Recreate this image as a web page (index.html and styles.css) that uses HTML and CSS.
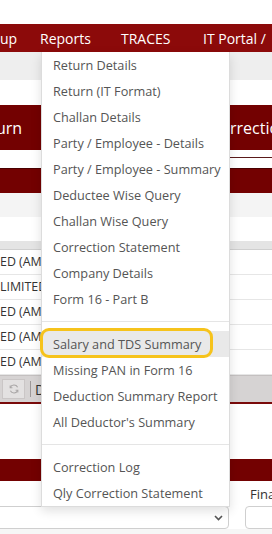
FILE: index.html
```html
<!DOCTYPE html>
<html>
<head>
<meta charset="utf-8">
<link rel="stylesheet" href="styles.css">
</head>
<body>
<div class="page">
  <div class="topgap"></div>
  <nav class="nav">
    <span class="nav-item up">up</span>
    <span class="nav-item reports">Reports</span>
    <span class="nav-item traces">TRACES</span>
    <span class="nav-item">IT Portal /</span>
  </nav>
  <div class="subbar"></div>
  <div class="space25"></div>
  <div class="tabs">
    <span class="tab-left">urn</span>
    <span class="tab-right">rrectio</span>
  </div>
  <div class="strip"><span class="strip-line"></span></div>
  <div class="band"></div>
  <div class="filter"></div>
  <div class="space24"></div>
  <div class="thead"></div>
  <div class="rows">
    <div class="row"><span class="cell">ED (AMF</span></div>
    <div class="row"><span class="cell">LIMITED</span></div>
    <div class="row"><span class="cell">ED (AMF</span></div>
    <div class="row"><span class="cell">ED (AMI</span></div>
    <div class="row"><span class="cell">ED (AMF</span></div>
  </div>
  <div class="toolbar">
    <span class="tool-btn">
      <svg width="12" height="12" viewBox="0 0 12 12" fill="none" stroke="#a9a6a6" stroke-width="1.1">
        <path d="M9.6 4.2A4 4 0 0 0 2.3 4.6"/>
        <path d="M2.4 7.8A4 4 0 0 0 9.7 7.4"/>
        <path d="M2.2 2.6v2.2h2.2"/>
        <path d="M9.8 9.4V7.2H7.6"/>
      </svg>
    </span>
    <span class="tool-sep"></span>
    <span class="tool-text">D</span>
  </div>
  <div class="space54"></div>
  <div class="band2"></div>
  <div class="labels">
    <span class="label-right">Fina</span>
  </div>
  <div class="selects">
    <div class="select-box">
      <svg class="chev" width="9" height="6" viewBox="0 0 9 6" fill="none" stroke="#555" stroke-width="1.6"><path d="M1 1l3.5 3.5L8 1"/></svg>
    </div>
    <div class="input-box"></div>
  </div>
  <div class="bottom"></div>

  <ul class="menu">
    <li class="item">Return Details</li>
    <li class="item">Return (IT Format)</li>
    <li class="item">Challan Details</li>
    <li class="item">Party / Employee - Details</li>
    <li class="item">Party / Employee - Summary</li>
    <li class="item">Deductee Wise Query</li>
    <li class="item">Challan Wise Query</li>
    <li class="item">Correction Statement</li>
    <li class="item">Company Details</li>
    <li class="item">Form 16 - Part B</li>
    <li class="divider"></li>
    <li class="item active">Salary and TDS Summary</li>
    <li class="item">Missing PAN in Form 16</li>
    <li class="item">Deduction Summary Report</li>
    <li class="item">All Deductor's Summary</li>
    <li class="divider"></li>
    <li class="item">Correction Log</li>
    <li class="item">Qly Correction Statement</li>
  </ul>
  <div class="mark"></div>
</div>
</body>
</html>
```
FILE: styles.css
```css
* { box-sizing: border-box; margin: 0; padding: 0; }
body { margin: 0; background: #fff; font-family: "Open Sans", "Noto Sans", sans-serif; }
.page { position: relative; width: 272px; height: 534px; overflow: hidden; background: #fff; }

.topgap { height: 24px; background: #fff; }
.nav { height: 28px; background: #8c0a0a; display: flex; align-items: center; color: #fff; font-size: 14px; white-space: nowrap; overflow: hidden; }
.nav-item { flex-shrink: 0; }
.nav-item.up { width: 42px; margin-left: -2px; padding-left: 2px; }
.nav-item.reports { width: 81px; }
.nav-item.traces { width: 82px; }

.subbar { height: 28px; background: #eeeeee; }
.space25 { height: 25px; }
.tabs { height: 45px; background: #730101; display: grid; grid-template-columns: 1fr 42px; align-items: center; color: #fff; font-size: 16px; }
.tab-left { white-space: nowrap; margin-left: -4px; }
.tab-right { white-space: nowrap; overflow: hidden; }
.strip { height: 18px; display: flex; justify-content: flex-end; }
.strip-line { width: 42px; height: 8px; border-bottom: 1px solid #5a1a1a; }
.band { height: 25px; background: #730101; border-top: 1px solid #4a0000; }
.filter { height: 24px; background: #f4f4f4; }
.space24 { height: 24px; }
.thead { height: 9px; background: #e4e4e4; border-bottom: 1px solid #cfcfcf; }
.row { height: 25px; border-bottom: 1px solid #e6e6e6; font-size: 12.4px; line-height: 24px; color: #333; white-space: nowrap; }
.cell { display: block; width: 41px; overflow: hidden; }

.toolbar { height: 29px; background: #d6d3d3; border-top: 1px solid #c4c0c0; border-bottom: 2px solid #7a0a0a; display: flex; align-items: center; padding-left: 2px; }
.tool-btn { width: 23px; height: 20px; background: #e3e1e1; border: 1px solid #cac6c6; display: flex; align-items: center; justify-content: center; }
.tool-sep { width: 1px; height: 16px; background: #9c9898; margin-left: 5px; }
.tool-text { margin-left: 4px; font-size: 14px; color: #333; }

.space54 { height: 55px; }
.band2 { height: 22px; background: #730101; }
.labels { height: 25px; display: flex; justify-content: flex-end; align-items: center; font-size: 13px; color: #333; white-space: nowrap; }
.label-right { width: 22px; }
.selects { height: 23px; display: flex; gap: 16px; margin-left: -6px; }
.select-box { width: 235px; flex-shrink: 0; border: 1px solid #cfcfcf; border-radius: 4px; display: flex; align-items: center; justify-content: flex-end; padding-right: 5px; }
.input-box { flex: 1 0 40px; border: 1px solid #cfcfcf; border-radius: 4px; }
.bottom { height: 5px; background: #f6f6f6; }

.menu { position: absolute; left: 41px; top: 52px; width: 189px; list-style: none; background: #fff; border: 1px solid #dcdcdc; border-top: none; box-shadow: 0 4px 10px rgba(0,0,0,0.12); }
.item { height: 26px; line-height: 26px; padding-left: 11px; font-size: 12.7px; color: #555; white-space: nowrap; }
.item.active { background: #e9e9e9; }
.divider { height: 1px; margin: 9px 0; background: #e5e5e5; }

.mark { position: absolute; left: 40px; top: 328px; width: 173px; height: 30px; border: 3px solid #f6c31c; border-radius: 9px; }
```
